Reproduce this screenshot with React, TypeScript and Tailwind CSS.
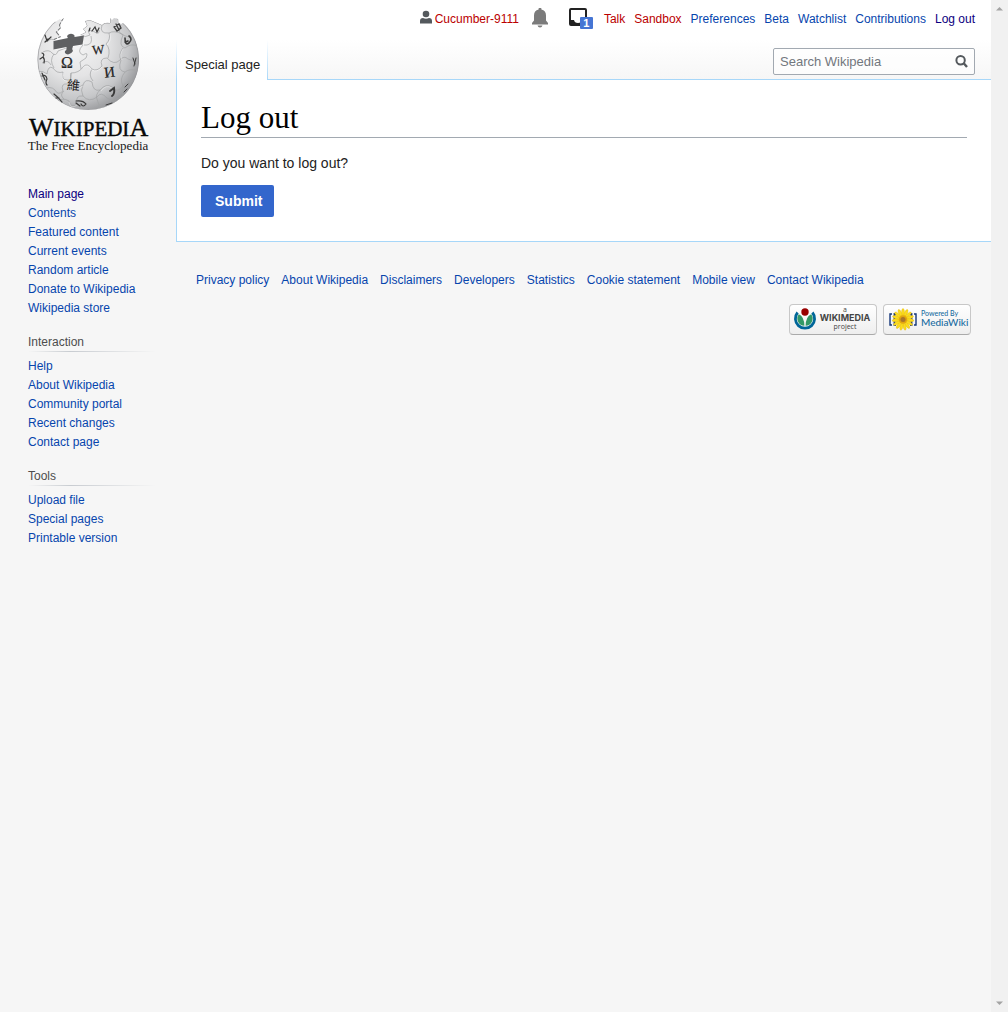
import React from "react";

const LINK = "text-[#0645ad] hover:underline";
const VISITED = "text-[#0b0080] hover:underline";
const MISSING = "text-[#ba0000] hover:underline";

const personal = [
  { label: "Talk", tone: MISSING },
  { label: "Sandbox", tone: MISSING },
  { label: "Preferences", tone: LINK },
  { label: "Beta", tone: LINK },
  { label: "Watchlist", tone: LINK },
  { label: "Contributions", tone: LINK },
  { label: "Log out", tone: VISITED },
];

const mainLinks = [
  "Main page",
  "Contents",
  "Featured content",
  "Current events",
  "Random article",
  "Donate to Wikipedia",
  "Wikipedia store",
];

const portals = [
  {
    title: "Interaction",
    links: ["Help", "About Wikipedia", "Community portal", "Recent changes", "Contact page"],
  },
  { title: "Tools", links: ["Upload file", "Special pages", "Printable version"] },
];

const footerLinks = [
  "Privacy policy",
  "About Wikipedia",
  "Disclaimers",
  "Developers",
  "Statistics",
  "Cookie statement",
  "Mobile view",
  "Contact Wikipedia",
];

function Logo() {
  return (
    <svg width="140" height="155" viewBox="0 0 140 155" aria-label="Wikipedia, The Free Encyclopedia">
      <defs>
        <radialGradient id="globe" cx="0.36" cy="0.34" r="0.72">
          <stop offset="0" stopColor="#f6f6f6" />
          <stop offset="0.45" stopColor="#e4e4e5" />
          <stop offset="0.75" stopColor="#c6c7c9" />
          <stop offset="1" stopColor="#909194" />
        </radialGradient>
        <clipPath id="ball">
          <path d="M44 13L41 15L40 14L36 17L34 16A51 51 0 1 0 107 21L103 18L101 19L99 18L98 14L94 13L92 15L90 13L90 18Q84 17 82 20L70 15L65 16L67 21L63 24L66 27L60 30L64 31L62 40L34 45L34 35L41 32L37 27L41 23L40 20Z" />
        </clipPath>
      </defs>
      <g clipPath="url(#ball)">
        <circle cx="68.3" cy="55" r="51" fill="url(#globe)" />
        <circle cx="68.3" cy="55" r="50.5" fill="none" stroke="#8f9093" strokeWidth="1" opacity="0.6" />
        <g fill="none" stroke="#a2a3a5" strokeWidth="0.7">
          <path d="M23 47Q29 44 32 48Q36 52 38 46L46 43M17 67Q23 65 27 69Q28 60 33 63Q37 69 43 67Q41 75 47 75Q52 76 51 68Q59 68 63 62Q67 57 72 64Q77 67 82 61Q79 53 87 53Q94 61 100 55Q104 50 108 54Q113 57 120 51" />
          <path d="M23 85Q30 80 35 85Q38 91 43 86Q40 78 48 79Q58 84 63 80Q65 73 72 77Q73 87 80 85Q86 78 92 82Q97 89 103 81Q106 76 114 76" />
          <path d="M35 97Q43 92 49 96Q51 104 57 99Q55 90 63 91Q69 98 77 92Q81 86 87 93Q93 98 104 90" />
          <path d="M63 40Q56 47 63 50Q69 46 66 53L60 57L61 64M51 68Q49 74 54 79M72 64Q68 70 73 76M63 80Q60 85 63 91M80 85Q75 90 77 94L81 106M44 86Q39 90 44 94M34 63Q29 55 34 49" />
          <path d="M60 30Q66 33 70 30Q66 24 73 26Q80 31 79 25M71 31Q73 39 67 40L64 40M82 20Q79 29 89 28Q91 34 86 39Q91 44 88 53M89 28Q94 25 102 29Q108 34 112 29M101 20Q96 27 103 30Q98 41 105 43Q111 38 117 41M103 43Q98 50 101 55Q97 66 105 67Q110 63 119 66M105 67Q99 74 103 81L103 94M27 37Q31 32 36 36M22 58Q28 54 31 60" />
        </g>
        <g fill="none" stroke="#fff" strokeWidth="0.5" opacity="0.75">
          <path d="M17 68Q23 66 27 70M43 68Q41 76 47 76M63 63Q67 58 72 65Q77 68 82 62M48 80Q58 85 63 81M81 86Q86 79 92 83M49 97Q51 105 57 100M90 29Q92 35 87 40M103 44Q99 50 102 55" />
        </g>
        <path d="M44 13L40 20L41 23L37 27L41 32L34 35" fill="none" stroke="#77787a" strokeWidth="2" strokeDasharray="4 1.5" />
        <path d="M60 30L66 27L63 24L67 21L65 16L70 15L82 20Q84 17 90 18L90 13" fill="none" stroke="#9b9c9e" strokeWidth="1" />
      </g>
      <path d="M33.5 36L48 33Q46 31 48.5 29.5Q51 28 53.5 29.5Q55 30 54.5 32L64 30.5L62.5 39.5L53 41Q51.5 44 53 46Q51.5 49 48 49.5Q44 48.5 45 46Q47 45 46.5 42L33.5 44.5Z" fill="#5f6062" />
      <g fill="#252525" stroke="#252525" strokeWidth="0.2" fontFamily="'Liberation Serif', serif">
        <text x="41" y="63" fontSize="16">Ω</text>
        <text x="72" y="49" fontSize="13" transform="rotate(-5 78 44)">W</text>
        <text x="84" y="72" fontSize="15" transform="rotate(-7 90 66)">И</text>
        <text x="47" y="85" fontSize="13" strokeWidth="0" fontFamily="'Noto Sans CJK TC', sans-serif" transform="rotate(6 53 80)">維</text>
      </g>
      <g fill="none" stroke="#3a3a3a" strokeWidth="1.2" strokeLinecap="round">
        <path d="M25 30L27 36L31 32M28 34L25 37M70 23L69 26M72 26L75 22L77 27L79 23" />
        <path d="M94 22L99 19L101 23L97 26ZM96 19L99 25" strokeWidth="1.3" />
        <path d="M105 33Q105 41 109 38Q113 34 109 31M108 36L105 37" strokeWidth="1.6" />
        <path d="M22 48Q25 49 23 52Q25 54 24 58M20 54L23 52M22 68L25 75M22 71Q26 69 27 74Q25 78 27 80M34 89Q38 92 42 97M36 93L39 93" />
        <path d="M90 86L94 83Q95 89 92 91" strokeWidth="2" />
        <path d="M56 96Q63 95 66 99Q63 103 61 99M56 98L60 101" />
        <path d="M113 53L115 59M116 53L114 61M105 82L108 79M107 84L104 87M86 100L92 98" strokeWidth="1" />
      </g>
      <text x="9" y="131" fontFamily="'Liberation Serif', serif" fill="#080808" stroke="#080808" strokeWidth="0.4">
        <tspan fontSize="26">W</tspan>
        <tspan fontSize="21">IKIPEDI</tspan>
        <tspan fontSize="26">A</tspan>
      </text>
      <text x="68" y="145" textAnchor="middle" fontFamily="'Liberation Serif', serif" fontSize="13" fill="#202020">
        The Free Encyclopedia
      </text>
    </svg>
  );
}

function UserIcon() {
  return (
    <svg width="12" height="14" viewBox="0 0 12 14" fill="#54595d" aria-hidden="true">
      <circle cx="6" cy="4" r="3.3" />
      <path d="M0 13.5V11Q0 8 3 8Q6 9.5 9 8Q12 8 12 11V13.5Z" />
    </svg>
  );
}

function BellIcon() {
  return (
    <svg width="18" height="20" viewBox="0 0 18 20" fill="#7b7b7b" aria-hidden="true">
      <path d="M7.6 1.5V1Q7.6 -0.5 9 -0.5T10.4 1V1.5Q15 2.7 15 7.5V12.5L17 15V16.5H1V15L3 12.5V7.5Q3 2.7 7.6 1.5Z" />
      <path d="M6.5 17.5H11.5Q11 19.5 9 19.5T6.5 17.5Z" />
    </svg>
  );
}

function TrayIcon() {
  return (
    <svg width="18" height="18" viewBox="0 0 18 18" aria-hidden="true">
      <path fillRule="evenodd" fill="#222" d="M2 0H16Q18 0 18 2V16Q18 18 16 18H2Q0 18 0 16V2Q0 0 2 0ZM2 2V12H5Q5.5 15 9 15T13 12H16V2Z" />
    </svg>
  );
}

function WikimediaBadge() {
  return (
    <a href="#wikimedia" className="flex h-[31px] w-[88px] items-center rounded border border-[#c8c8c8] border-b-[#aaaaaa] bg-linear-to-b from-white to-[#eeeeee]">
      <svg width="86" height="29" viewBox="0 0 86 29" aria-label="a Wikimedia project">
        <circle cx="15" cy="7" r="3.7" fill="#900" />
        <path d="M7.6 7.5A9.6 9.6 0 1 0 22.4 7.5" fill="none" stroke="#069" strokeWidth="2.8" />
        <path d="M8.8 9.2Q14.2 11.5 14.4 20.7A7.2 7.2 0 0 1 8.8 9.2ZM21.2 9.2Q15.8 11.5 15.6 20.7A7.2 7.2 0 0 0 21.2 9.2Z" fill="#396" />
        <g fill="#444" textAnchor="middle" fontFamily="'Open Sans', sans-serif">
          <text x="55" y="7" fontSize="7">a</text>
          <text x="55" y="16" fontSize="9" fontFamily="Inter, sans-serif" fontWeight="700">WIKIMEDIA</text>
          <text x="55" y="24" fontSize="7">project</text>
        </g>
      </svg>
    </a>
  );
}

const petals = [0, 24, 48, 72, 96, 120, 144, 168, 192, 216, 240, 264, 288, 312, 336];

function MediaWikiBadge() {
  return (
    <a href="#mediawiki" className="flex h-[31px] w-[88px] items-center rounded border border-[#c8c8c8] border-b-[#aaaaaa] bg-linear-to-b from-white to-[#eeeeee]">
      <svg width="86" height="29" viewBox="0 0 86 29" aria-label="Powered by MediaWiki">
        <path d="M8 9H6V20H8M30 9H32V20H30" fill="none" stroke="#15367a" strokeWidth="1.4" />
        <path d="M12 9H10.5V20H12M26 9H27.5V20H26" fill="none" stroke="#15367a" strokeWidth="1.8" />
        {petals.map((a) => (
          <ellipse key={a} cx="19" cy="7.3" rx="1.4" ry="3.7" fill="#fbdc1c" stroke="#e3b70e" strokeWidth="0.4" transform={`rotate(${a} 19 14.5)`} />
        ))}
        <circle cx="19" cy="14.5" r="4.2" fill="#e2a60d" />
        <circle cx="19" cy="14.5" r="2.5" fill="#a8752c" />
        <g fill="#176ba0" fontFamily="Lato, sans-serif" fontWeight="500">
          <text x="37" y="11" fontSize="7">Powered By</text>
          <text x="37" y="21" fontSize="10">MediaWiki</text>
        </g>
      </svg>
    </a>
  );
}

function LinkList({ links }: { links: string[] }) {
  return (
    <ul>
      {links.map((label) => (
        <li key={label} className="h-[19px] leading-[19px]">
          <a href="#page" className={label === "Main page" ? VISITED : LINK}>
            {label}
          </a>
        </li>
      ))}
    </ul>
  );
}

function Sidebar() {
  return (
    <aside className="w-44 shrink-0 text-xs">
      <a href="#main" className="block pt-[5px] pl-5">
        <Logo />
      </a>
      <nav aria-label="Navigation" className="mt-[25px] pl-7">
        <LinkList links={mainLinks} />
        {portals.map((p) => (
          <section key={p.title} className="pt-[15px]">
            <h3 className="h-[18px] leading-[19px] text-[#4d4d4d]">{p.title}</h3>
            <div className="mr-5 mb-[5px] h-px bg-linear-to-r from-transparent via-[#c8ccd1] via-33% to-transparent" />
            <LinkList links={p.links} />
          </section>
        ))}
      </nav>
    </aside>
  );
}

function Header() {
  return (
    <header className="flex h-20 flex-col">
      <ul className="flex h-10 items-start justify-end gap-[9px] pt-2 pr-4 text-xs leading-[22px]">
        <li className="flex gap-[3px]">
          <span className="pt-[2px]">
            <UserIcon />
          </span>
          <a href="#user" className={MISSING}>
            Cucumber-9111
          </a>
        </li>
        <li className="ml-[3px]">
          <button aria-label="Alerts" className="block">
            <BellIcon />
          </button>
        </li>
        <li className="mr-[3px] ml-[11px]">
          <button aria-label="Notices" className="relative block pr-[5px]">
            <TrayIcon />
            <span className="absolute top-[9px] left-[11px] flex h-3 w-[13px] items-center justify-center rounded-[1px] bg-[#4575d4] text-[11px] leading-3 font-bold text-white">
              1
            </span>
          </button>
        </li>
        {personal.map((p) => (
          <li key={p.label}>
            <a href="#personal" className={p.tone}>
              {p.label}
            </a>
          </li>
        ))}
      </ul>
      <div className="flex h-10 items-stretch">
        <div className="w-px bg-linear-to-b from-white to-[#a7d7f9]" />
        <a href="#special" className="bg-white pt-[15px] pr-[7px] pl-2 text-[13px] leading-5 text-[#222]">
          Special page
        </a>
        <div className="w-px bg-linear-to-b from-white to-[#a7d7f9]" />
        <div className="flex flex-1 justify-end border-b border-[#a7d7f9] pt-2 pr-4">
          <form className="flex h-[27px] w-[202px] items-center rounded-xs border border-[#a2a9b1] bg-white/60">
            <input
              aria-label="Search Wikipedia"
              placeholder="Search Wikipedia"
              className="h-full min-w-0 flex-1 bg-transparent pl-[6px] text-[13px] text-[#222] outline-none placeholder:text-[#72777d]"
            />
            <button type="button" aria-label="Search" className="pr-[6px]">
              <svg width="13" height="13" viewBox="0 0 13 13" fill="none" stroke="#54595d" strokeWidth="2" aria-hidden="true">
                <circle cx="5.6" cy="5.2" r="4.2" />
                <path d="M8.5 8L12 12" strokeWidth="2.4" />
              </svg>
            </button>
          </form>
        </div>
      </div>
    </header>
  );
}

export default function App() {
  return (
    <div className="flex min-h-screen bg-[#f6f6f6] font-['Liberation_Sans',Arial,sans-serif] text-[#222]">
      <div className="min-w-0 flex-1 bg-[linear-gradient(to_bottom,#ffffff_40px,#f6f6f6_80px)]">
        <div className="flex">
          <Sidebar />
          <div className="min-w-0 flex-1">
            <Header />
            <main className="border-b border-l border-[#a7d7f9] bg-white px-6 pt-5 pb-6 text-sm">
              <h1 className="border-b border-[#a2a9b1] pb-[1px] font-['Liberation_Serif',serif] text-[31px] leading-9 text-black">
                Log out
              </h1>
              <form>
                <p className="mt-[14px] leading-[22px]">Do you want to log out?</p>
                <button
                  type="button"
                  className="mt-[11px] h-8 rounded-xs bg-[#3366cc] pr-3 pl-[14px] text-sm font-bold text-white"
                >
                  Submit
                </button>
              </form>
            </main>
            <footer className="px-5 text-xs">
              <ul className="flex flex-wrap gap-x-3 pt-7 leading-5">
                {footerLinks.map((label) => (
                  <li key={label}>
                    <a href="#footer" className={LINK}>
                      {label}
                    </a>
                  </li>
                ))}
              </ul>
              <div className="mt-[14px] flex justify-end gap-[6px]">
                <WikimediaBadge />
                <MediaWikiBadge />
              </div>
            </footer>
          </div>
        </div>
      </div>
      <div aria-hidden="true" className="flex w-[17px] shrink-0 flex-col items-center justify-between bg-[#f1f1f1] py-[6px]">
        <svg width="7" height="5" viewBox="0 0 7 5" fill="#a3a3a3">
          <path d="M0 4.5L3.5 1L7 4.5Z" />
        </svg>
        <svg width="7" height="5" viewBox="0 0 7 5" fill="#a3a3a3">
          <path d="M0 0.5L3.5 4L7 0.5Z" />
        </svg>
      </div>
    </div>
  );
}
